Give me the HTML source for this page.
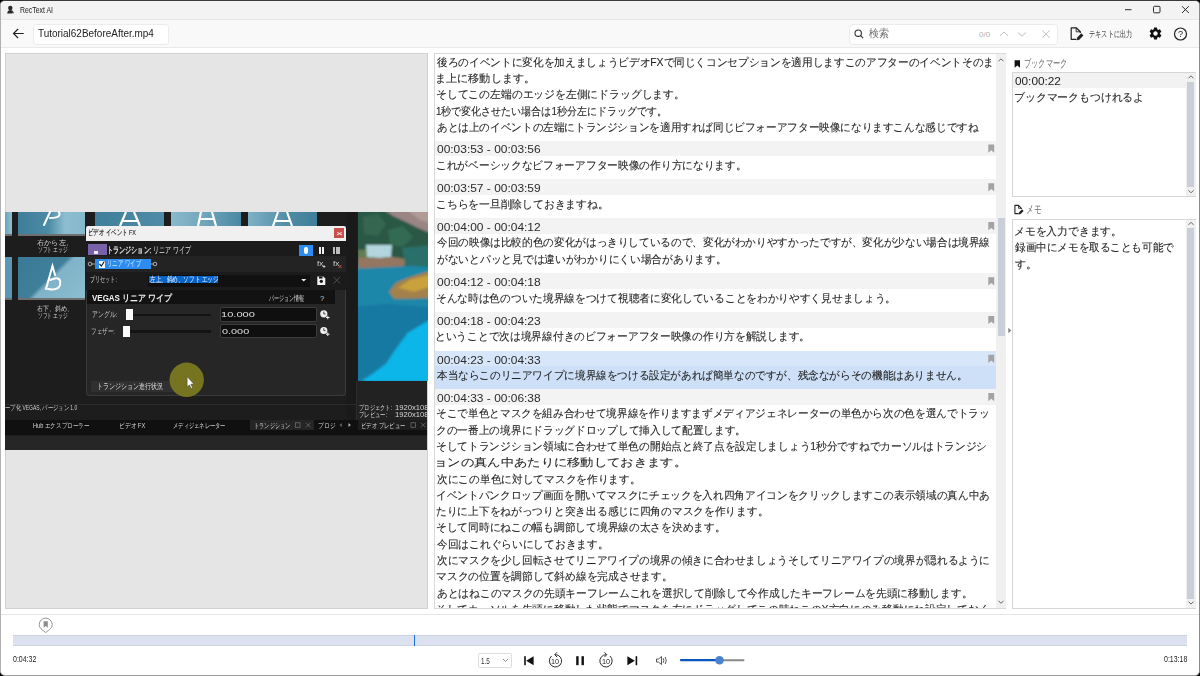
<!DOCTYPE html>
<html><head><meta charset="utf-8"><style>
html,body{margin:0;padding:0;width:1200px;height:676px;overflow:hidden;background:#000;font-family:"Liberation Sans", sans-serif;}
#win{position:absolute;left:0;top:0;width:1200px;height:676px;overflow:hidden;}
.t{position:absolute;white-space:nowrap;line-height:20px;}
svg{position:absolute;overflow:visible}
</style></head><body><div id="win">
<div style="position:absolute;left:0px;top:0px;width:1200px;height:676px;background:#fff;border-radius:5px;border-top:1px solid #3a3a3a;border-left:1px solid #b0b0b0;border-right:1px solid #8a8a8a;border-bottom:1px solid #9a9a9a;box-sizing:border-box;"></div><div style="position:absolute;left:1px;top:1px;width:1198px;height:17.6px;background:#f3f3f3;border-radius:4px 4px 0 0;"></div><div style="position:absolute;left:1px;top:18.6px;width:1198px;height:1px;background:#e6e6e6;"></div><div style="position:absolute;left:1px;top:19.6px;width:1198px;height:27.6px;background:#f9f9f9;"></div><div style="position:absolute;left:1px;top:47px;width:1198px;height:1.2px;background:#e9e9e9;"></div><svg style="left:0;top:0" width="1200" height="30"><g fill="#2a2a2a"><circle cx="10.3" cy="8" r="2.2"/><path d="M7.2 13.5 Q7.5 10 10.3 10 Q13 10 13.3 12 L12.2 13.5 Z"/><path d="M11.5 11.5 l2.5 0.5 l-0.8 1.8z" fill="#555"/></g></svg><svg style="left:0;top:0" width="1200" height="30"><g stroke="#2b2b2b" stroke-width="1" fill="none"><path d="M1125 9.7 H1131.5"/><rect x="1153.5" y="6.3" width="6.5" height="6.5" rx="1"/><path d="M1182 6.2 L1188.8 13 M1188.8 6.2 L1182 13"/></g></svg><svg style="left:0;top:0" width="200" height="50"><g stroke="#222" stroke-width="1.2" fill="none" stroke-linecap="round"><path d="M13.5 33.5 H23.3 M17.8 29.3 L13.5 33.5 L17.8 37.7"/></g></svg><div style="position:absolute;left:33px;top:23.5px;width:136px;height:21px;background:#fff;border:1px solid #ececec;box-sizing:border-box;border-radius:3px;"></div><div style="position:absolute;left:849px;top:23.8px;width:208.5px;height:20.8px;background:#fff;border:1px solid #ebebeb;box-sizing:border-box;border-radius:4px;"></div><svg style="left:0;top:0" width="1200" height="50"><g stroke="#333" stroke-width="1.1" fill="none"><circle cx="858.2" cy="33.2" r="3.2"/><path d="M860.6 35.6 L863.2 38.2"/></g><g stroke="#b5b5b5" stroke-width="0.9" fill="none"><path d="M1000 35.8 L1004 32 L1008 35.8"/><path d="M1018 32.5 L1022 36.2 L1026 32.5"/><path d="M1042.3 30.5 L1049.7 37.8 M1049.7 30.5 L1042.3 37.8"/></g></svg><svg style="left:0;top:0" width="1200" height="50"><g fill="none" stroke="#222" stroke-width="1.2" stroke-linejoin="round"><path d="M1076.5 39.3 H1071.2 V27.8 H1076.2 L1080.3 31.8 V33"/><path d="M1076.2 27.8 V31.8 H1080.3" stroke-width="0.9"/></g><path d="M1077.2 37.6 L1081.3 33.3 L1083.4 35.4 L1079.3 39.7 L1076.8 40.2 Z" fill="#222"/></svg><svg style="left:1148px;top:25.9px" width="15" height="15" viewBox="0 0 24 24"><path fill="#111" d="M19.14 12.94c.04-.3.06-.61.06-.94 0-.32-.02-.64-.07-.94l2.03-1.58a.49.49 0 0 0 .12-.61l-1.92-3.32a.488.488 0 0 0-.59-.22l-2.39.96c-.5-.38-1.03-.7-1.62-.94l-.36-2.54a.484.484 0 0 0-.48-.41h-3.84c-.24 0-.43.17-.47.41l-.36 2.54c-.59.24-1.13.57-1.62.94l-2.39-.96c-.22-.08-.47 0-.59.22L2.74 8.87c-.12.21-.08.47.12.61l2.03 1.58c-.05.3-.09.63-.09.94s.02.64.07.94l-2.03 1.58a.49.49 0 0 0-.12.61l1.92 3.32c.12.22.37.29.59.22l2.39-.96c.5.38 1.03.7 1.62.94l.36 2.54c.05.24.24.41.48.41h3.84c.24 0 .44-.17.47-.41l.36-2.54c.59-.24 1.13-.56 1.62-.94l2.39.96c.22.08.47 0 .59-.22l1.92-3.32c.12-.22.07-.47-.12-.61l-2.01-1.58zM12 15.6c-1.98 0-3.6-1.62-3.6-3.6s1.62-3.6 3.6-3.6 3.6 1.62 3.6 3.6-1.62 3.6-3.6 3.6z"/></svg><svg style="left:0;top:0" width="1200" height="50"><circle cx="1180.5" cy="34" r="6" stroke="#222" stroke-width="1.2" fill="none"/></svg><div style="position:absolute;left:5px;top:53px;width:423px;height:556px;background:#e5e5e5;border:1px solid #d2d2d2;box-sizing:border-box;"></div><div style="position:absolute;left:5px;top:212px;width:422.3px;height:237.5px;background:#1d1d1d;"></div><div style="position:absolute;left:5px;top:212px;width:7px;height:21.5px;background:linear-gradient(90deg,#6da3bb,#8fbfd2);"></div><div style="position:absolute;left:18.4px;top:212px;width:67px;height:21.5px;background:linear-gradient(90deg,#3e7e99 0%,#4a8aa5 45%,#8cbdd0 70%,#86b8cc 100%);"></div><div style="position:absolute;left:5px;top:233.5px;width:7px;height:2px;background:#6f6f6f;"></div><div style="position:absolute;left:18.4px;top:233.5px;width:67px;height:2px;background:#6f6f6f;"></div><div style="position:absolute;left:5px;top:256.5px;width:7px;height:41px;background:#5b98b3;"></div><div style="position:absolute;left:18.4px;top:256.5px;width:67px;height:41px;background:linear-gradient(135deg,#3b7a96 0%,#3f7f9a 47%,#80b3c8 53%,#8cbdd0 100%);"></div><div style="position:absolute;left:5px;top:297.5px;width:7px;height:2.5px;background:#6f6f6f;"></div><div style="position:absolute;left:18.4px;top:297.5px;width:67px;height:2.5px;background:#6f6f6f;"></div><svg style="left:0;top:0" width="430" height="450"><g stroke="#fff" stroke-width="2" fill="none" stroke-linecap="round"><path d="M44 225 L50 212"/><path d="M50 218 Q62 218 59 212"/><path d="M46 289 L52.5 266 L55 275"/><path d="M50 280 Q62 275 60 285 Q58 291 48 289"/></g></svg><div style="position:absolute;left:94.7px;top:212px;width:69.6px;height:14px;background:linear-gradient(90deg,#3f7f9a,#4f8ca6);"></div><div style="position:absolute;left:171.3px;top:212px;width:69.7px;height:14px;background:linear-gradient(90deg,#8ab9cd 0%,#6fa4ba 50%,#4a88a3 100%);"></div><div style="position:absolute;left:248px;top:212px;width:68.6px;height:14px;background:linear-gradient(90deg,#7fb1c6 0%,#4e8ba5 60%,#3f7e99 100%);"></div><svg style="left:0;top:0" width="430" height="450"><g stroke="#fff" stroke-width="2.2" fill="none"><path d="M120 226 L126 212 M134 212 L140 226 M122 221 H138"/><path d="M198 226 L201 212 M212 212 L216 226 M199 219 H214"/><path d="M273 226 L278 212 M287 212 L292 226 M275 221 H290"/></g></svg><div style="position:absolute;left:346px;top:212px;width:11.3px;height:207.5px;background:#1a1a1a;"></div><svg style="left:357.5px;top:212.3px;overflow:hidden" width="70" height="168.7" viewBox="0 0 70 169" preserveAspectRatio="none"><defs><filter id="bl" x="-20%" y="-20%" width="140%" height="140%"><feGaussianBlur stdDeviation="0.9"/></filter><linearGradient id="lk" x1="0" y1="0" x2="0" y2="1"><stop offset="0" stop-color="#1f86a4"/><stop offset="0.4" stop-color="#1c84aa"/><stop offset="1" stop-color="#1a86b8"/></linearGradient></defs><rect width="70" height="169" fill="url(#lk)"/><g filter="url(#bl)"><path d="M-5 -5 H75 V56 L60 56 L45 54 L30 50 L0 52 L-5 52 Z" fill="#2c5846"/><path d="M5 5 L20 2 L28 12 L20 24 L6 22 Z" fill="#356650"/><path d="M30 18 L45 14 L55 25 L45 35 L32 32 Z" fill="#326a52"/><path d="M22 -5 H75 V22 L60 16 L48 10 L35 4 Z" fill="#9a8584"/><path d="M45 -5 H75 V12 L62 8 Z" fill="#b09c94"/><path d="M0 38 L14 37 L14 46 L0 47 Z" fill="#657d52"/><path d="M8 33 L34 33 L33 45 L22 46 L9 45 Z" fill="#b2d6de"/><path d="M0 46 L20 46 L35 45 L48 47 L46 55 L30 56 L0 57 Z" fill="#957660"/><path d="M44 36 L75 33 V54 L48 56 Z" fill="#2b6f6a"/><path d="M-5 57 L50 54 L75 55 V100 L-5 100 Z" fill="#1e87a8"/><path d="M31 80 L38 71 L52 65 L75 58 V86 L55 87 L36 87 Z" fill="#a4804c"/><path d="M40 76 L52 68 L75 62 V74 L56 80 Z" fill="#c9a23e"/><path d="M-5 95 L30 92 L75 96 V108 L50 122 L38 138 L28 152 L15 162 L0 170 L-5 170 Z" fill="#1879a2"/><path d="M75 106 L50 121 L38 137 L28 152 L16 161 L3 170 H75 Z" fill="#10b6e8"/></g></svg><div style="position:absolute;left:357.3px;top:381px;width:70px;height:39.3px;background:#222;"></div><div style="position:absolute;left:85.5px;top:226px;width:260.5px;height:14.5px;background:#f0f0f0;border-radius:2px 2px 0 0;"></div><div style="position:absolute;left:334px;top:227.8px;width:10.3px;height:10.5px;background:#c8504c;"></div><div style="position:absolute;left:85.5px;top:240.5px;width:260.5px;height:155.5px;background:#1c1c1c;"></div><div style="position:absolute;left:85.5px;top:240.5px;width:260.5px;height:15.5px;background:#1b1b1b;"></div><div style="position:absolute;left:88px;top:244px;width:18.5px;height:11.3px;background:#7a62a8;"></div><div style="position:absolute;left:94px;top:250.5px;width:4px;height:3.2px;background:#eee;"></div><div style="position:absolute;left:299px;top:244.8px;width:14px;height:11.3px;background:#2d8cf0;"></div><div style="position:absolute;left:304.3px;top:247px;width:3.8px;height:7px;background:#fff;border-radius:2px;"></div><div style="position:absolute;left:318.5px;top:247px;width:2px;height:7px;background:#f0f0f0;"></div><div style="position:absolute;left:321.5px;top:247px;width:2px;height:7px;background:#f0f0f0;"></div><div style="position:absolute;left:333.3px;top:247px;width:1.8px;height:7px;background:#bbb;"></div><div style="position:absolute;left:335.8px;top:247px;width:1.8px;height:7px;background:#bbb;"></div><div style="position:absolute;left:338.3px;top:247px;width:1.8px;height:7px;background:#bbb;"></div><div style="position:absolute;left:85.5px;top:256px;width:260.5px;height:15.5px;background:#232323;"></div><svg style="left:0;top:0" width="430" height="450"><g stroke="#ccc" stroke-width="0.8" fill="none"><circle cx="90" cy="264" r="1.8"/><path d="M91.8 264 H95"/><circle cx="155" cy="264" r="1.8"/><path d="M151 264 H153.2"/></g></svg><div style="position:absolute;left:95px;top:258.8px;width:56px;height:10.6px;background:#2d8cf0;"></div><div style="position:absolute;left:98.5px;top:260.5px;width:6.5px;height:7px;background:#fff;"></div><svg style="left:0;top:0" width="430" height="450"><path d="M99.5 263.8 L101.3 266 L104.3 261.5" stroke="#111" stroke-width="1.1" fill="none"/></svg><svg style="left:0;top:0" width="430" height="450"><path d="M322.5 266.5 H325.5 M324 265 V268" stroke="#ddd" stroke-width="0.8"/><path d="M338.5 265 L341.5 268 M341.5 265 L338.5 268" stroke="#e0503a" stroke-width="0.9"/></svg><div style="position:absolute;left:85.5px;top:271.5px;width:260.5px;height:18px;background:#1b1b1b;"></div><div style="position:absolute;left:148px;top:274.8px;width:162px;height:12.5px;background:#101010;"></div><div style="position:absolute;left:149px;top:275.8px;width:68.5px;height:7.5px;background:#0a64c8;"></div><svg style="left:0;top:0" width="430" height="450"><path d="M301.2 279 H306.3 L303.75 281.6 Z" fill="#eee"/><path d="M317.3 276.5 H323.3 L325.3 278.5 V285 H317.3 Z" fill="#f2f2f2"/><circle cx="321.3" cy="281.3" r="1.6" fill="#111"/><rect x="319" y="276.5" width="3.5" height="2" fill="#111"/><path d="M333.5 277 L340 283.5 M340 277 L333.5 283.5" stroke="#555" stroke-width="0.9"/></svg><div style="position:absolute;left:85.5px;top:289.5px;width:260.5px;height:106.5px;background:#262626;border:1px solid #3a3a3a;border-top:none;border-radius:0 0 3px 3px;box-sizing:border-box;"></div><div style="position:absolute;left:86.5px;top:289.5px;width:248px;height:14.8px;background:#121212;"></div><div style="position:absolute;left:132px;top:313.6px;width:79px;height:2.8px;background:#141414;"></div><div style="position:absolute;left:130px;top:330.2px;width:81px;height:2.8px;background:#141414;"></div><div style="position:absolute;left:125.5px;top:309px;width:7px;height:11.3px;background:#fafafa;"></div><div style="position:absolute;left:123.3px;top:325.8px;width:7px;height:11.3px;background:#fafafa;"></div><div style="position:absolute;left:219.8px;top:307px;width:97.5px;height:14.5px;background:#0f0f0f;border:1px solid #3c3c3c;box-sizing:border-box;border-radius:2px;"></div><div style="position:absolute;left:219.8px;top:323.8px;width:97.5px;height:14.5px;background:#0f0f0f;border:1px solid #3c3c3c;box-sizing:border-box;border-radius:2px;"></div><svg style="left:0;top:0" width="430" height="450"><g><circle cx="323.8" cy="313.8" r="3.6" fill="#eee"/><path d="M323.8 311.6 V313.9 H325.6" stroke="#222" stroke-width="0.8" fill="none"/><path d="M326 317.5 H329.5 M327.75 315.75 V319.25" stroke="#eee" stroke-width="1"/><circle cx="323.8" cy="330.5" r="3.6" fill="#eee"/><path d="M323.8 328.3 V330.6 H325.6" stroke="#222" stroke-width="0.8" fill="none"/><path d="M326 334.2 H329.5 M327.75 332.45 V335.95" stroke="#eee" stroke-width="1"/></g></svg><div style="position:absolute;left:91px;top:380.8px;width:82.5px;height:11.5px;background:#303030;"></div><svg style="left:0;top:0" width="430" height="450"><circle cx="186.7" cy="379.8" r="17.2" fill="#767420"/><path d="M187.2 376.8 V387 L189.4 384.8 L191.2 388.6 L192.5 388 L190.8 384.2 L193.8 384 Z" fill="#fff" stroke="#333" stroke-width="0.4"/></svg><div style="position:absolute;left:5px;top:403.5px;width:350.5px;height:0.8px;background:#2a2a2a;"></div><div style="position:absolute;left:355.5px;top:381px;width:0.8px;height:39px;background:#2c2c2c;"></div><div style="position:absolute;left:5px;top:420.3px;width:422.3px;height:15.2px;background:#101010;"></div><div style="position:absolute;left:5px;top:435.5px;width:422.3px;height:14px;background:#262626;"></div><div style="position:absolute;left:250.3px;top:420.3px;width:64.2px;height:10px;background:#252525;"></div><div style="position:absolute;left:357.6px;top:420.3px;width:69.7px;height:10px;background:#1d1d1d;"></div><svg style="left:0;top:0" width="430" height="450"><g stroke="#777" stroke-width="0.7" fill="none"><rect x="295.5" y="422.8" width="4.5" height="4.5"/><path d="M306 422.8 L310.5 427.3 M310.5 422.8 L306 427.3"/><rect x="411" y="422.8" width="4.5" height="4.5"/><path d="M421 422.8 L425.5 427.3 M425.5 422.8 L421 427.3"/></g><path d="M341.8 423 V427 L339.5 425 Z" fill="#666"/><path d="M348.5 423 V427 L350.8 425 Z" fill="#bbb"/></svg><div style="position:absolute;left:434px;top:53px;width:572px;height:556px;background:#fff;border:1px solid #d9d9d9;box-sizing:border-box;"></div><div style="position:absolute;left:435px;top:140.7px;width:561px;height:15.6px;background:#f3f3f3;"></div><svg style="left:0;top:0" width="1010" height="620"><path d="M988.3 144.5 H994.2 V152.7 L991.25 150.3 L988.3 152.7 Z" fill="#a3a3a3"/></svg><div style="position:absolute;left:435px;top:179.4px;width:561px;height:15.6px;background:#f3f3f3;"></div><svg style="left:0;top:0" width="1010" height="620"><path d="M988.3 183.2 H994.2 V191.4 L991.25 189.0 L988.3 191.4 Z" fill="#a3a3a3"/></svg><div style="position:absolute;left:435px;top:218.3px;width:561px;height:15.6px;background:#f3f3f3;"></div><svg style="left:0;top:0" width="1010" height="620"><path d="M988.3 222.1 H994.2 V230.3 L991.25 227.9 L988.3 230.3 Z" fill="#a3a3a3"/></svg><div style="position:absolute;left:435px;top:273.4px;width:561px;height:15.6px;background:#f3f3f3;"></div><svg style="left:0;top:0" width="1010" height="620"><path d="M988.3 277.2 H994.2 V285.4 L991.25 283.0 L988.3 285.4 Z" fill="#a3a3a3"/></svg><div style="position:absolute;left:435px;top:312.1px;width:561px;height:15.6px;background:#f3f3f3;"></div><svg style="left:0;top:0" width="1010" height="620"><path d="M988.3 315.9 H994.2 V324.1 L991.25 321.7 L988.3 324.1 Z" fill="#a3a3a3"/></svg><div style="position:absolute;left:435px;top:350.9px;width:561px;height:38.699999999999996px;background:#cde0f7;"></div><div style="position:absolute;left:435px;top:350.9px;width:561px;height:15.6px;background:#d7e6f9;"></div><svg style="left:0;top:0" width="1010" height="620"><path d="M988.3 354.7 H994.2 V362.9 L991.25 360.5 L988.3 362.9 Z" fill="#a3a3a3"/></svg><div style="position:absolute;left:435px;top:389.2px;width:561px;height:15.6px;background:#f3f3f3;"></div><svg style="left:0;top:0" width="1010" height="620"><path d="M988.3 393.0 H994.2 V401.2 L991.25 398.8 L988.3 401.2 Z" fill="#a3a3a3"/></svg><div style="position:absolute;left:996px;top:54px;width:10px;height:554px;background:#f0f0f0;"></div><div style="position:absolute;left:997.8px;top:218.2px;width:7px;height:117.6px;background:#c9ced9;"></div><svg style="left:0;top:0" width="1010" height="620"><g stroke="#555" stroke-width="0.9" fill="none"><path d="M998.5 61.3 L1001 58.8 L1003.5 61.3"/><path d="M998.5 600.8 L1001 603.3 L1003.5 600.8"/></g><path d="M1008.3 327.8 L1011.3 330.5 L1008.3 333.2 Z" fill="#808080"/></svg><svg style="left:0;top:0" width="1200" height="620"><path d="M1014.6 60.2 H1020 V67.8 L1017.3 65.5 L1014.6 67.8 Z" fill="#111"/></svg><div style="position:absolute;left:1012px;top:72.3px;width:184px;height:125px;background:#fff;border:1px solid #d6d6d6;box-sizing:border-box;"></div><div style="position:absolute;left:1013px;top:73.3px;width:173px;height:14.8px;background:#f2f2f2;"></div><div style="position:absolute;left:1186px;top:73px;width:10px;height:123px;background:#f0f0f0;"></div><div style="position:absolute;left:1187.3px;top:82px;width:7px;height:105px;background:#c9ced9;"></div><svg style="left:0;top:0" width="1200" height="620"><g stroke="#555" stroke-width="0.9" fill="none"><path d="M1188.5 78.3 L1191 75.8 L1193.5 78.3"/><path d="M1188.5 190.3 L1191 192.8 L1193.5 190.3"/><path d="M1188.5 224.8 L1191 222.3 L1193.5 224.8"/><path d="M1188.5 601.6 L1191 604.1 L1193.5 601.6"/></g></svg><svg style="left:0;top:0" width="1200" height="620"><g fill="none" stroke="#222" stroke-width="1.1" stroke-linejoin="round"><path d="M1018.6 213.6 H1014.9 V205.4 H1018.5 L1021.4 208.3 V209"/><path d="M1018.5 205.4 V208.3 H1021.4" stroke-width="0.8"/></g><path d="M1019 212.4 L1022 209.3 L1023.6 210.9 L1020.6 214 L1018.7 214.4 Z" fill="#222"/></svg><div style="position:absolute;left:1012px;top:218.5px;width:184px;height:390.5px;background:#fff;border:1px solid #d6d6d6;box-sizing:border-box;"></div><div style="position:absolute;left:1186px;top:219.5px;width:10px;height:388.5px;background:#f0f0f0;"></div><div style="position:absolute;left:1187.3px;top:228px;width:7px;height:370.5px;background:#c9ced9;"></div><svg style="left:0;top:0" width="1200" height="620"><g stroke="#555" stroke-width="0.9" fill="none"><path d="M1188.5 224.8 L1191 222.3 L1193.5 224.8"/><path d="M1188.5 601.6 L1191 604.1 L1193.5 601.6"/></g></svg><div style="position:absolute;left:1px;top:614px;width:1198px;height:1px;background:#e6e6e6;"></div><svg style="left:0;top:0" width="1200" height="676"><path d="M45.7 632.6 C44.5 631.2 39.2 629 39.2 624.6 A6.5 6.5 0 0 1 52.2 624.6 C52.2 629 46.9 631.2 45.7 632.6 Z" fill="#fff" stroke="#7a7a7a" stroke-width="0.8"/><path d="M43.6 621.2 H47.8 V627.7 L45.7 625.9 L43.6 627.7 Z" fill="#8c8c8c"/></svg><div style="position:absolute;left:13px;top:635px;width:1174px;height:10.7px;background:#dbe1ee;border-top:1px solid #cdd2dc;border-bottom:1px solid #cfd4de;box-sizing:border-box;"></div><div style="position:absolute;left:414px;top:635px;width:1.2px;height:10.5px;background:#1a6fd8;"></div><div style="position:absolute;left:477.5px;top:653px;width:34px;height:14.5px;background:#fff;border:1px solid #dedede;box-sizing:border-box;border-radius:2px;"></div><svg style="left:0;top:0" width="1200" height="676"><g stroke="#777" stroke-width="0.8" fill="none"><path d="M503 659 L505.5 661.5 L508 659"/></g><g fill="#111"><rect x="524.2" y="656.2" width="1.6" height="9"/><path d="M533.6 656.2 V665.2 L526.2 660.7 Z"/><rect x="576.2" y="656.2" width="2.4" height="9"/><rect x="581.5" y="656.2" width="2.4" height="9"/><rect x="635.6" y="656.2" width="1.6" height="9"/><path d="M627.4 656.2 V665.2 L634.8 660.7 Z"/></g><g stroke="#222" stroke-width="0.95" fill="none" stroke-linecap="round"><path d="M551.3 656.2 A6.2 6.2 0 1 0 555.6 654.6"/><path d="M556.8 652.6 L554.7 654.7 L556.8 656.8"/><path d="M610.2 656.2 A6.2 6.2 0 1 1 605.9 654.6"/><path d="M604.7 652.6 L606.8 654.7 L604.7 656.8"/></g><g stroke="#444" stroke-width="0.9" fill="none" stroke-linejoin="round"><path d="M656.5 659 H658.5 L661.5 656.5 V664.5 L658.5 662 H656.5 Z"/><path d="M663.2 658.2 Q664.5 660.5 663.2 662.8"/><path d="M665.2 657 Q667.3 660.5 665.2 664"/></g><path d="M681 660.2 H716" stroke="#0a55c0" stroke-width="2.2" stroke-linecap="round"/><path d="M723 660.2 H743.5" stroke="#888" stroke-width="2" stroke-linecap="round"/><circle cx="719.5" cy="660.2" r="4.3" fill="#4a82cf"/></svg>
<div class="t" style="left:19.50px;top:0.00px;font-size:9px;font-weight:normal;color:#1a1a1a;transform:scaleX(0.7674);transform-origin:0 0;">RecText AI</div><div class="t" style="left:38.30px;top:22.80px;font-size:10.5px;font-weight:normal;color:#222;transform:scaleX(0.9484);transform-origin:0 0;">Tutorial62BeforeAfter.mp4</div><div class="t" style="left:869.00px;top:23.30px;font-size:10.5px;font-weight:normal;color:#6b6b6b;transform:scaleX(0.9091);transform-origin:0 0;">検索</div><div class="t" style="left:979.00px;top:24.50px;font-size:8px;font-weight:normal;color:#b0b0b0;">0/0</div><div class="t" style="left:1088.50px;top:24.20px;font-size:8.5px;font-weight:normal;color:#333;transform:scaleX(0.6855);transform-origin:0 0;">テキストに出力</div><div class="t" style="left:1178.20px;top:24.20px;font-size:9.5px;font-weight:normal;color:#222;transform:scaleX(0.9600);transform-origin:0 0;">?</div><div class="t" style="left:37.00px;top:232.70px;font-size:7px;font-weight:normal;color:#d6d6d6;transform:scaleX(1.0333);transform-origin:0 0;">右から左、</div><div class="t" style="left:37.83px;top:240.10px;font-size:7px;font-weight:normal;color:#d6d6d6;transform:scaleX(0.6744);transform-origin:0 0;">ソフト エッジ</div><div class="t" style="left:36.50px;top:298.50px;font-size:7px;font-weight:normal;color:#d6d6d6;transform:scaleX(0.8649);transform-origin:0 0;">右下、斜め、</div><div class="t" style="left:37.83px;top:305.70px;font-size:7px;font-weight:normal;color:#d6d6d6;transform:scaleX(0.6744);transform-origin:0 0;">ソフト エッジ</div><div class="t" style="left:358.74px;top:397.90px;font-size:7px;font-weight:normal;color:#d8d8d8;transform:scaleX(0.7558);transform-origin:0 0;">プロジェクト:</div><div class="t" style="left:395.20px;top:397.90px;font-size:7px;font-weight:normal;color:#d8d8d8;transform:scaleX(1.0903);transform-origin:0 0;">1920x108</div><div class="t" style="left:358.74px;top:405.30px;font-size:7px;font-weight:normal;color:#d8d8d8;transform:scaleX(0.7639);transform-origin:0 0;">プレビュー:</div><div class="t" style="left:395.20px;top:405.30px;font-size:7px;font-weight:normal;color:#d8d8d8;transform:scaleX(1.0903);transform-origin:0 0;">1920x108</div><div class="t" style="left:87.62px;top:223.30px;font-size:8px;font-weight:normal;color:#1a1a1a;transform:scaleX(0.6768);transform-origin:0 0;-webkit-text-stroke:0.15px #1a1a1a;">ビデオ イベント FX</div><div class="t" style="left:335.50px;top:223.50px;font-size:8px;font-weight:normal;color:#fff;transform:scaleX(1.5000);transform-origin:0 0;">×</div><div class="t" style="left:106.97px;top:240.00px;font-size:8.5px;font-weight:normal;color:#eeeeee;transform:scaleX(0.6774);transform-origin:0 0;-webkit-text-stroke:0.25px #eee;">トランジション:</div><div class="t" style="left:152.67px;top:240.00px;font-size:8.5px;font-weight:normal;color:#e0e0e0;transform:scaleX(0.6667);transform-origin:0 0;">リニア ワイプ</div><div class="t" style="left:107.15px;top:253.80px;font-size:8px;font-weight:normal;color:#cfe6ff;transform:scaleX(0.6771);transform-origin:0 0;">リニア ワイプ</div><div class="t" style="left:316.50px;top:253.50px;font-size:7.5px;font-weight:normal;color:#cfcfcf;transform:scaleX(1.0833);transform-origin:0 0;">fx</div><div class="t" style="left:332.50px;top:253.50px;font-size:7.5px;font-weight:normal;color:#cfcfcf;transform:scaleX(1.0833);transform-origin:0 0;">fx</div><div class="t" style="left:89.66px;top:269.50px;font-size:7.5px;font-weight:normal;color:#cfcfcf;transform:scaleX(0.6390);transform-origin:0 0;">プリセット:</div><div class="t" style="left:149.50px;top:269.50px;font-size:7.5px;font-weight:normal;color:#e8f2ff;transform:scaleX(0.6959);transform-origin:0 0;">左上、斜め、ソフト エッジ</div><div class="t" style="left:92.00px;top:288.00px;font-size:9px;font-weight:bold;color:#f2f2f2;transform:scaleX(0.8859);transform-origin:0 0;">VEGAS リニア ワイプ</div><div class="t" style="left:268.50px;top:288.50px;font-size:7.5px;font-weight:normal;color:#cfcfcf;transform:scaleX(0.6250);transform-origin:0 0;">バージョン情報</div><div class="t" style="left:320.00px;top:289.00px;font-size:7.5px;font-weight:normal;color:#cfcfcf;">?</div><div class="t" style="left:91.57px;top:305.00px;font-size:7.5px;font-weight:normal;color:#c8c8c8;transform:scaleX(0.7333);transform-origin:0 0;">アングル:</div><div class="t" style="left:90.91px;top:321.50px;font-size:7.5px;font-weight:normal;color:#c8c8c8;transform:scaleX(0.6938);transform-origin:0 0;">フェザー:</div><div class="t" style="left:220.92px;top:304.80px;font-size:8px;font-weight:normal;color:#e0e0e0;transform:scaleX(1.3833);transform-origin:0 0;">10.000</div><div class="t" style="left:222.30px;top:321.50px;font-size:8px;font-weight:normal;color:#e0e0e0;transform:scaleX(1.3600);transform-origin:0 0;">0.000</div><div class="t" style="left:97.24px;top:376.80px;font-size:7.5px;font-weight:normal;color:#dcdcdc;transform:scaleX(0.7529);transform-origin:0 0;">トランジション進行状況</div><div class="t" style="left:5.00px;top:398.30px;font-size:6.5px;font-weight:normal;color:#cfcfcf;transform:scaleX(0.7632);transform-origin:0 0;">ープ化 VEGAS, バージョン 1.0</div><div class="t" style="left:33.30px;top:415.60px;font-size:7px;font-weight:normal;color:#d8d8d8;transform:scaleX(0.7986);transform-origin:0 0;">Hub エクスプローラー</div><div class="t" style="left:118.68px;top:415.60px;font-size:7px;font-weight:normal;color:#d8d8d8;transform:scaleX(0.8226);transform-origin:0 0;">ビデオ FX</div><div class="t" style="left:173.25px;top:415.60px;font-size:7px;font-weight:normal;color:#d8d8d8;transform:scaleX(0.7536);transform-origin:0 0;">メディジェネレーター</div><div class="t" style="left:253.51px;top:415.60px;font-size:7px;font-weight:normal;color:#d8d8d8;transform:scaleX(0.7447);transform-origin:0 0;">トランジション</div><div class="t" style="left:317.68px;top:415.60px;font-size:7px;font-weight:normal;color:#d8d8d8;transform:scaleX(0.8250);transform-origin:0 0;">プロジ</div><div class="t" style="left:361.24px;top:415.60px;font-size:7px;font-weight:normal;color:#d8d8d8;transform:scaleX(0.7632);transform-origin:0 0;">ビデオ プレビュー</div><div class="t" style="left:437.30px;top:51.80px;font-size:10.8px;font-weight:normal;color:#262626;transform:scaleX(0.9689);transform-origin:0 0;-webkit-text-stroke:0.1px #262626;">後ろのイベントに変化を加えましょうビデオFXで同じくコンセプションを適用しますこのアフターのイベントそのま</div><div class="t" style="left:435.28px;top:68.10px;font-size:10.8px;font-weight:normal;color:#262626;transform:scaleX(1.0100);transform-origin:0 0;-webkit-text-stroke:0.1px #262626;">ま上に移動します。</div><div class="t" style="left:436.32px;top:84.40px;font-size:10.8px;font-weight:normal;color:#262626;transform:scaleX(0.9833);transform-origin:0 0;-webkit-text-stroke:0.1px #262626;">そしてこの左端のエッジを左側にドラッグします。</div><div class="t" style="left:436.39px;top:100.70px;font-size:10.8px;font-weight:normal;color:#262626;transform:scaleX(0.9093);transform-origin:0 0;-webkit-text-stroke:0.1px #262626;">1秒で変化させたい場合は1秒分左にドラッグです。</div><div class="t" style="left:437.30px;top:117.00px;font-size:10.8px;font-weight:normal;color:#262626;transform:scaleX(0.9651);transform-origin:0 0;-webkit-text-stroke:0.1px #262626;">あとは上のイベントの左端にトランジションを適用すれば同じビフォーアフター映像になりますこんな感じですね</div><div class="t" style="left:437.30px;top:139.30px;font-size:11px;font-weight:normal;color:#2b2b2b;transform:scaleX(1.0863);transform-origin:0 0;">00:03:53 - 00:03:56</div><div class="t" style="left:436.33px;top:154.85px;font-size:10.8px;font-weight:normal;color:#262626;transform:scaleX(0.9733);transform-origin:0 0;-webkit-text-stroke:0.1px #262626;">これがベーシックなビフォーアフター映像の作り方になります。</div><div class="t" style="left:437.30px;top:178.00px;font-size:11px;font-weight:normal;color:#2b2b2b;transform:scaleX(1.0863);transform-origin:0 0;">00:03:57 - 00:03:59</div><div class="t" style="left:436.32px;top:193.55px;font-size:10.8px;font-weight:normal;color:#262626;transform:scaleX(0.9804);transform-origin:0 0;-webkit-text-stroke:0.1px #262626;">こちらを一旦削除しておきますね。</div><div class="t" style="left:437.30px;top:216.90px;font-size:11px;font-weight:normal;color:#2b2b2b;transform:scaleX(1.0863);transform-origin:0 0;">00:04:00 - 00:04:12</div><div class="t" style="left:437.30px;top:232.45px;font-size:10.8px;font-weight:normal;color:#262626;transform:scaleX(0.9670);transform-origin:0 0;-webkit-text-stroke:0.1px #262626;">今回の映像は比較的色の変化がはっきりしているので、変化がわかりやすかったですが、変化が少ない場合は境界線</div><div class="t" style="left:437.30px;top:248.75px;font-size:10.8px;font-weight:normal;color:#262626;transform:scaleX(0.9748);transform-origin:0 0;-webkit-text-stroke:0.1px #262626;">がないとパッと見では違いがわかりにくい場合があります。</div><div class="t" style="left:437.30px;top:272.00px;font-size:11px;font-weight:normal;color:#2b2b2b;transform:scaleX(1.0863);transform-origin:0 0;">00:04:12 - 00:04:18</div><div class="t" style="left:436.33px;top:287.55px;font-size:10.8px;font-weight:normal;color:#262626;transform:scaleX(0.9727);transform-origin:0 0;-webkit-text-stroke:0.1px #262626;">そんな時は色のついた境界線をつけて視聴者に変化していることをわかりやすく見せましょう。</div><div class="t" style="left:437.30px;top:310.70px;font-size:11px;font-weight:normal;color:#2b2b2b;transform:scaleX(1.0863);transform-origin:0 0;">00:04:18 - 00:04:23</div><div class="t" style="left:435.35px;top:326.25px;font-size:10.8px;font-weight:normal;color:#262626;transform:scaleX(0.9742);transform-origin:0 0;-webkit-text-stroke:0.1px #262626;">ということで次は境界線付きのビフォーアフター映像の作り方を解説します。</div><div class="t" style="left:437.30px;top:349.50px;font-size:11px;font-weight:normal;color:#2b2b2b;transform:scaleX(1.0863);transform-origin:0 0;">00:04:23 - 00:04:33</div><div class="t" style="left:437.30px;top:365.05px;font-size:10.8px;font-weight:normal;color:#262626;transform:scaleX(0.9643);transform-origin:0 0;-webkit-text-stroke:0.1px #262626;">本当ならこのリニアワイプに境界線をつける設定があれば簡単なのですが、残念ながらその機能はありません。</div><div class="t" style="left:437.30px;top:387.80px;font-size:11px;font-weight:normal;color:#2b2b2b;transform:scaleX(1.0863);transform-origin:0 0;">00:04:33 - 00:06:38</div><div class="t" style="left:436.33px;top:403.35px;font-size:10.8px;font-weight:normal;color:#262626;transform:scaleX(0.9678);transform-origin:0 0;-webkit-text-stroke:0.1px #262626;">そこで単色とマスクを組み合わせて境界線を作りますまずメディアジェネレーターの単色から次の色を選んでトラッ</div><div class="t" style="left:436.33px;top:419.65px;font-size:10.8px;font-weight:normal;color:#262626;transform:scaleX(0.9723);transform-origin:0 0;-webkit-text-stroke:0.1px #262626;">クの一番上の境界にドラッグドロップして挿入して配置します。</div><div class="t" style="left:436.33px;top:435.95px;font-size:10.8px;font-weight:normal;color:#262626;transform:scaleX(0.9720);transform-origin:0 0;-webkit-text-stroke:0.1px #262626;">そしてトランジション領域に合わせて単色の開始点と終了点を設定しましょう1秒分ですねでカーソルはトランジシ</div><div class="t" style="left:433.67px;top:452.25px;font-size:10.8px;font-weight:normal;color:#262626;transform:scaleX(1.2106);transform-origin:0 0;-webkit-text-stroke:0.1px #262626;">ョンの真ん中あたりに移動しておきます。</div><div class="t" style="left:437.30px;top:468.55px;font-size:10.8px;font-weight:normal;color:#262626;transform:scaleX(0.9738);transform-origin:0 0;-webkit-text-stroke:0.1px #262626;">次にこの単色に対してマスクを作ります。</div><div class="t" style="left:436.33px;top:484.85px;font-size:10.8px;font-weight:normal;color:#262626;transform:scaleX(0.9686);transform-origin:0 0;-webkit-text-stroke:0.1px #262626;">イベントパンクロップ画面を開いてマスクにチェックを入れ四角アイコンをクリックしますこの表示領域の真ん中あ</div><div class="t" style="left:436.33px;top:501.15px;font-size:10.8px;font-weight:normal;color:#262626;transform:scaleX(0.9745);transform-origin:0 0;-webkit-text-stroke:0.1px #262626;">たりに上下をねがっつりと突き出る感じに四角のマスクを作ります。</div><div class="t" style="left:436.33px;top:517.45px;font-size:10.8px;font-weight:normal;color:#262626;transform:scaleX(0.9747);transform-origin:0 0;-webkit-text-stroke:0.1px #262626;">そして同時にねこの幅も調節して境界線の太さを決めます。</div><div class="t" style="left:437.30px;top:533.75px;font-size:10.8px;font-weight:normal;color:#262626;transform:scaleX(0.9746);transform-origin:0 0;-webkit-text-stroke:0.1px #262626;">今回はこれぐらいにしておきます。</div><div class="t" style="left:437.30px;top:550.05px;font-size:10.8px;font-weight:normal;color:#262626;transform:scaleX(0.9669);transform-origin:0 0;-webkit-text-stroke:0.1px #262626;">次にマスクを少し回転させてリニアワイプの境界の傾きに合わせましょうそしてリニアワイプの境界が隠れるように</div><div class="t" style="left:436.32px;top:566.35px;font-size:10.8px;font-weight:normal;color:#262626;transform:scaleX(0.9774);transform-origin:0 0;-webkit-text-stroke:0.1px #262626;">マスクの位置を調節して斜め線を完成させます。</div><div class="t" style="left:437.30px;top:582.65px;font-size:10.8px;font-weight:normal;color:#262626;transform:scaleX(0.9733);transform-origin:0 0;-webkit-text-stroke:0.1px #262626;">あとはねこのマスクの先頭キーフレームこれを選択して削除して今作成したキーフレームを先頭に移動します。</div><div class="t" style="left:436.33px;top:598.95px;font-size:10.8px;font-weight:normal;color:#262626;transform:scaleX(0.9737);transform-origin:0 0;-webkit-text-stroke:0.1px #262626;">そしてカーソルを先頭に移動した状態でマスクを左にドラッグしてこの時ねこのX方向にのみ移動にね設定しておく</div><div class="t" style="left:1024.34px;top:52.90px;font-size:10.5px;font-weight:normal;color:#6e6e6e;transform:scaleX(0.6587);transform-origin:0 0;">ブックマーク</div><div class="t" style="left:1014.50px;top:70.70px;font-size:11px;font-weight:normal;color:#222;transform:scaleX(1.0721);transform-origin:0 0;">00:00:22</div><div class="t" style="left:1013.81px;top:86.50px;font-size:10.8px;font-weight:normal;color:#262626;transform:scaleX(0.9860);transform-origin:0 0;-webkit-text-stroke:0.1px #262626;">ブックマークもつけれるよ</div><div class="t" style="left:1026.30px;top:199.30px;font-size:10.5px;font-weight:normal;color:#6e6e6e;transform:scaleX(0.7000);transform-origin:0 0;">メモ</div><div class="t" style="left:1013.82px;top:221.00px;font-size:10.8px;font-weight:normal;color:#262626;transform:scaleX(0.9824);transform-origin:0 0;-webkit-text-stroke:0.1px #262626;">メモを入力できます。</div><div class="t" style="left:1014.80px;top:237.30px;font-size:10.8px;font-weight:normal;color:#262626;transform:scaleX(0.9624);transform-origin:0 0;-webkit-text-stroke:0.1px #262626;">録画中にメモを取ることも可能で</div><div class="t" style="left:1014.80px;top:253.60px;font-size:10.8px;font-weight:normal;color:#262626;transform:scaleX(1.0133);transform-origin:0 0;-webkit-text-stroke:0.1px #262626;">す。</div><div class="t" style="left:13.00px;top:649.20px;font-size:8.5px;font-weight:normal;color:#222;transform:scaleX(0.8214);transform-origin:0 0;">0:04:32</div><div class="t" style="left:1164.00px;top:649.20px;font-size:8.5px;font-weight:normal;color:#222;transform:scaleX(0.8214);transform-origin:0 0;">0:13:18</div><div class="t" style="left:480.50px;top:650.50px;font-size:8.5px;font-weight:normal;color:#333;transform:scaleX(0.7500);transform-origin:0 0;">1.5</div><div class="t" style="left:551.20px;top:652.00px;font-size:7px;font-weight:normal;color:#222;transform:scaleX(1.0375);transform-origin:0 0;">10</div><div class="t" style="left:602.00px;top:652.00px;font-size:7px;font-weight:normal;color:#222;transform:scaleX(1.0375);transform-origin:0 0;">10</div>
<div style="position:absolute;left:434px;top:608px;width:572px;height:6.5px;background:#fff;"></div><div style="position:absolute;left:1px;top:614px;width:1198px;height:1px;background:#e6e6e6;"></div><div style="position:absolute;left:434px;top:615px;width:572px;height:4px;background:#fff;"></div><div style="position:absolute;left:434px;top:608px;width:572px;height:1px;background:#d9d9d9;"></div>
</div></body></html>
